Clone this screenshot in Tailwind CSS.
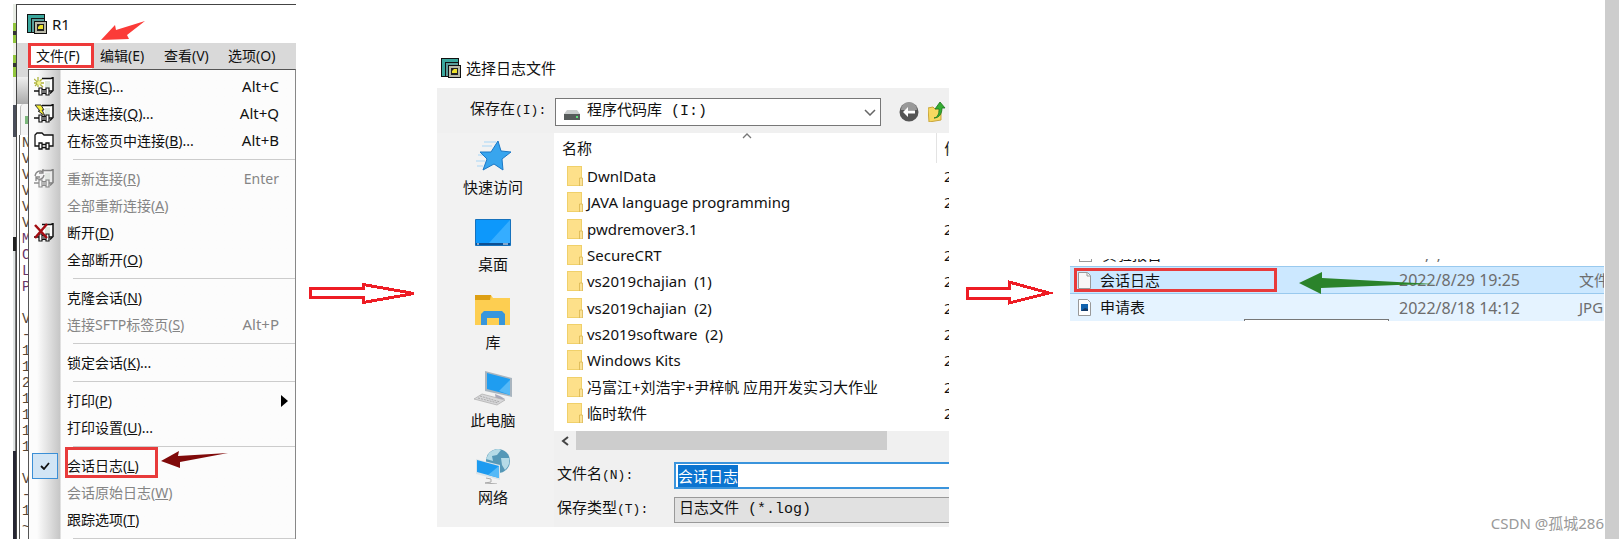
<!DOCTYPE html>
<html lang="zh-CN">
  <head>
    <meta charset="UTF-8" />
    <meta name="viewport" content="width=device-width, initial-scale=1.0" />
    <title>SecureCRT 会话日志</title>
    <script src="https://cdn.jsdelivr.net/npm/@tailwindcss/browser@4"></script>
    <style>
      body {
        font-family: 'Noto Sans', 'Noto Sans CJK SC', sans-serif;
      }
      .mono {
        font-family: 'Liberation Mono', 'Noto Sans CJK SC', monospace;
      }
    </style>
  </head>
  <body class="bg-white text-[#111] overflow-hidden">
    <!-- Shared icons -->
    <svg class="hidden">
      <symbol id="app" viewBox="0 0 20 20">
        <path d="M0 0h18v5H5v14H0z" fill="#111" />
        <path d="M1 1h16v3H4v14H1z" fill="#3aa79d" />
        <path d="M4 4h14v4H8v11H4z" fill="#111" />
        <path d="M5 5h12v2H7v11H5z" fill="#5a9d9a" />
        <path d="M7 7h13v13H7z" fill="#111" />
        <path d="M8 8h11v11H8z" fill="#b9b9a8" />
        <path d="M10 10h7v7h-7z" fill="#222" />
        <path d="M11 13l2-2h3v4h-5z" fill="#eee22a" />
      </symbol>
      <symbol id="host" viewBox="0 0 20 20">
        <path d="M8 1.500h9l2-1v13l-3 3H8z" fill="#fff" />
        <path d="M8 1.500h9l2-1v13l-3 3" fill="none" stroke="#111" stroke-width="1.500" />
        <path d="M11 4h5v7h-5z" fill="#dfe9df" />
        <path d="M0 14h5M15 14h3" stroke="#111" stroke-width="1.500" fill="none" />
        <path d="M5 11h3v7H5zM12 11h3v7h-3zM8 12.500h4v4H8zM10 12v5" fill="#fff" stroke="#111" stroke-width="1.200" />
      </symbol>
      <symbol id="folder" viewBox="0 0 16 20">
        <path d="M0 0h15v20H0z" fill="#f0d06a" />
        <path d="M1 1h13v18H1z" fill="#fde08a" />
        <path d="M12.500 12h3v8h-3z" fill="#fbe39a" stroke="#d9b54e" stroke-width=".8" />
      </symbol>
    </svg>

    <main class="flex items-start h-screen pl-[13px]">
      <!-- Session window with the file menu open -->
      <section class="relative flex w-[283px] shrink-0 h-full pt-1 overflow-hidden">
        <div class="w-[3px] shrink-0 flex flex-col">
          <div class="h-[19px] bg-[#e8ece4]"></div>
          <div class="h-2 bg-[#92c63e]"></div>
          <div class="h-1 bg-[#333]"></div>
          <div class="h-2 bg-[#92c63e]"></div>
          <div class="h-3 bg-[#f0f0e8]"></div>
          <div class="h-2 bg-[#92c63e]"></div>
          <div class="h-1 bg-[#333]"></div>
          <div class="h-[10px] bg-[#92c63e]"></div>
          <div class="h-7 bg-[#f2f2f2]"></div>
          <div class="h-8 bg-[#4a4e5a]"></div>
          <div class="h-[100px] bg-[#ececec]"></div>
          <div class="h-[14px] bg-[#222]"></div>
          <div class="h-[200px] bg-[#e0e4e4] border-r border-[#777]"></div>
          <div class="flex-1 bg-[#262633]"></div>
        </div>
        <div class="flex-1 flex flex-col min-w-0 border-l border-t border-[#444]">
          <header class="h-[38px] shrink-0 flex items-center gap-[5px] pl-[10px]">
            <svg class="size-5"><use href="#app" /></svg>
            <h1 class="text-[15px]">R1</h1>
          </header>
          <nav class="relative h-[26px] shrink-0 flex items-center pl-[11px] bg-[#d9d9d9] text-sm">
            <button class="w-16 h-full pl-2 text-left bg-white">文件(F)</button>
            <button class="w-16 pl-2 text-left">编辑(E)</button>
            <button class="w-16 pl-2 text-left">查看(V)</button>
            <button class="w-16 pl-2 text-left whitespace-nowrap">选项(O)</button>
            <div class="absolute left-[11px] top-0 w-[66px] h-[25px] border-3 border-[#ee3a3a]"></div>
          </nav>
          <div class="flex-1 flex min-h-0">
            <!-- Visible edge of the terminal -->
            <div class="w-[11px] shrink-0 overflow-hidden flex flex-col bg-white">
              <div class="h-2 shrink-0 bg-[#d9d9d9]"></div>
              <div class="h-[27px] shrink-0 bg-linear-to-b from-[#efefef] to-[#aaa]"></div>
              <div class="h-[31px] shrink-0 bg-[#f4f4f4] rounded-tl border-l border-[#bbb] ml-[3px] pl-1 pt-3">
                <div class="h-2 w-1 bg-[#7cb87c]"></div>
              </div>
              <pre class="flex-1 ml-[2px] pl-[2px] border-l border-[#555] mono text-sm leading-4 text-[#543]">N
V
V
V
V
V
<span class="text-[#636]">M
C
L
P</span>

V
-
1
1
2
1
1
1
1

V
-
1
~</pre>
            </div>
            <!-- File menu -->
            <div class="flex-1 relative flex flex-col pt-[3px] border-x border-t border-[#555] border-r-[#888] text-sm bg-linear-to-r from-[#fcfcfc] from-[8px] via-[#c6c6c6] via-[31px] to-[#fcfcfc] to-[32px]" role="menu">
              <button class="h-[27px] shrink-0 flex items-center pl-[5px] pr-4" role="menuitem">
                <svg class="w-5 h-5 mr-[13px]" viewBox="0 0 20 20"><use href="#host" /><path d="M0 2l9 8M1 9l7-7M4 0v10M0 6h10" stroke="#aeb43c" stroke-width="1.300" /><circle cx="5" cy="6" r="2" fill="#f4f48c" /></svg>
                <span>连接(<u>C</u>)...</span><span class="ml-auto text-[15px]">Alt+C</span>
              </button>
              <button class="h-[27px] shrink-0 flex items-center pl-[5px] pr-4" role="menuitem">
                <svg class="w-5 h-5 mr-[13px]" viewBox="0 0 20 20"><use href="#host" /><path d="M1 1h6l3 5H8l3 6-7-5h2z" fill="#f5ee35" stroke="#333" /></svg>
                <span>快速连接(<u>Q</u>)...</span><span class="ml-auto text-[15px]">Alt+Q</span>
              </button>
              <button class="h-[27px] shrink-0 flex items-center pl-[5px] pr-4" role="menuitem">
                <svg class="w-5 h-5 mr-[13px]" viewBox="0 0 20 20" fill="#fff" stroke="#111" stroke-width="1.300"><path d="M5 15H1V4l2-2h5l2 2h9v11h-4" /><path d="M5 12h3v6H5zM12 12h3v6h-3zM8 13.500h4v3H8z" /></svg>
                <span>在标签页中连接(<u>B</u>)...</span><span class="ml-auto text-[15px]">Alt+B</span>
              </button>
              <hr class="my-[5px] ml-[44px] border-[#ccc]" />
              <button class="h-[27px] shrink-0 flex items-center pl-[5px] pr-4 text-[#858585]" role="menuitem" disabled>
                <svg class="w-5 h-5 mr-[13px]" viewBox="0 0 20 20"><g opacity=".45"><use href="#host" /></g><path d="M1 7c1-5 5-6 8-4M9 0v4H5M10 6c-1 5-5 5-8 3M2 12V8h4" fill="none" stroke="#888" stroke-width="1.300" /></svg>
                <span>重新连接(<u>R</u>)</span><span class="ml-auto">Enter</span>
              </button>
              <button class="h-[27px] shrink-0 flex items-center pl-[38px] text-[#858585]" role="menuitem" disabled><span>全部重新连接(<u>A</u>)</span></button>
              <button class="h-[27px] shrink-0 flex items-center pl-[5px]" role="menuitem">
                <svg class="w-5 h-5 mr-[13px]" viewBox="0 0 20 20"><use href="#host" /><path d="M1 2l12 13M13 1L1 15" stroke="#a30d12" stroke-width="2.500" /></svg>
                <span>断开(<u>D</u>)</span>
              </button>
              <button class="h-[27px] shrink-0 flex items-center pl-[38px]" role="menuitem"><span>全部断开(<u>O</u>)</span></button>
              <hr class="my-[5px] ml-[44px] border-[#ccc]" />
              <button class="h-[27px] shrink-0 flex items-center pl-[38px]" role="menuitem"><span>克隆会话(<u>N</u>)</span></button>
              <button class="h-[27px] shrink-0 flex items-center pl-[38px] pr-4 text-[#858585]" role="menuitem" disabled>
                <span>连接SFTP标签页(<u>S</u>)</span><span class="ml-auto text-[15px]">Alt+P</span>
              </button>
              <hr class="my-[5px] ml-[44px] border-[#ccc]" />
              <button class="h-[27px] shrink-0 flex items-center pl-[38px]" role="menuitem"><span>锁定会话(<u>K</u>)...</span></button>
              <hr class="my-[5px] ml-[44px] border-[#ccc]" />
              <button class="h-[27px] shrink-0 flex items-center pl-[38px] pr-[7px]" role="menuitem">
                <span>打印(<u>P</u>)</span>
                <svg class="ml-auto w-[7px] h-3" viewBox="0 0 7 12"><path d="M0 0l7 6-7 6z" fill="#000" /></svg>
              </button>
              <button class="h-[27px] shrink-0 flex items-center pl-[38px]" role="menuitem"><span>打印设置(<u>U</u>)...</span></button>
              <hr class="my-[5px] ml-[44px] border-[#ccc]" />
              <button class="relative h-[27px] shrink-0 flex items-center pl-[3px]" role="menuitemcheckbox" aria-checked="true">
                <span class="w-[26px] h-[26px] mr-[9px] flex items-center justify-center bg-[#d2e5f5] border border-[#3b8fd6]">
                  <svg class="w-[10px] h-2" viewBox="0 0 10 8"><path d="M1 4l3 3 5-6" fill="none" stroke="#111" stroke-width="1.800" /></svg>
                </span>
                <span>会话日志(<u>L</u>)</span>
                <span class="absolute left-9 -top-[5px] w-[93px] h-[31px] border-3 border-[#e83b3b]"></span>
                <svg class="absolute left-[132px] -top-px w-[68px] h-[18px]" viewBox="0 0 68 18"><path d="M0 10L18 0l-1 5 50-3-48 9 0 6z" fill="#800a0a" /></svg>
              </button>
              <button class="h-[27px] shrink-0 flex items-center pl-[38px] text-[#858585]" role="menuitem" disabled><span>会话原始日志(<u>W</u>)</span></button>
              <button class="h-[27px] shrink-0 flex items-center pl-[38px]" role="menuitem"><span>跟踪选项(<u>T</u>)</span></button>
              <hr class="my-[5px] ml-[44px] border-[#ccc]" />
            </div>
          </div>
        </div>
        <svg class="absolute left-[88px] top-[21px] w-[44px] h-[20px]" viewBox="0 0 44 20"><path d="M0 19L14 4l1 5L44 0 26 14l2 4z" fill="#fb3b38" /></svg>
      </section>

      <svg class="shrink-0 mt-[282px] ml-3 w-[110px] h-6" viewBox="0 0 110 24"><path d="M2 6.500h53v-4L106 11.500 55 20.500v-5H2z" fill="#fff" stroke="#ee1c24" stroke-width="3" shape-rendering="crispEdges" /></svg>

      <!-- Save log file dialog -->
      <section class="shrink-0 ml-[19px] mt-12 w-[512px] overflow-hidden text-[15px]">
        <header class="h-10 flex items-center gap-[5px] pl-1">
          <svg class="size-5"><use href="#app" /></svg>
          <h2>选择日志文件</h2>
        </header>
        <form class="bg-[#f0f0f0] h-[439px] flex flex-col">
          <div class="h-[45px] shrink-0 flex items-center pt-[2px] pl-[33px]">
            <label for="place" class="w-[85px] mono">保存在<span class="text-[13px]">(I):</span></label>
            <div class="relative w-[326px] h-7">
              <select id="place" class="mono appearance-none w-full h-full pl-[31px] bg-white border border-[#777] leading-6">
                <option>程序代码库 (I:)</option>
              </select>
              <svg class="absolute left-[9px] top-3 w-4 h-[10px]" viewBox="0 0 16 10"><path d="M3 0h10l3 4H0z" fill="#c9cccc" /><path d="M0 4h16v6H0z" fill="#565b5a" /><path d="M12 6h2v2h-2z" fill="#5fe07c" /></svg>
              <svg class="absolute right-[5px] top-[11px] w-3 h-[7px]" viewBox="0 0 12 7"><path d="M1 1l5 5 5-5" fill="none" stroke="#666" stroke-width="1.500" /></svg>
            </div>
            <button type="button" class="ml-[18px]" aria-label="后退">
              <svg class="size-5" viewBox="0 0 20 20"><circle cx="10" cy="10" r="9.500" fill="#555" /><path d="M2 8a8 8 0 0116 0z" fill="#999" /><path d="M4 10l5-5v3.500h7v3H9V15z" fill="#fff" /></svg>
            </button>
            <button type="button" class="ml-[9px] shrink-0" aria-label="上一级">
              <svg class="w-[18px] h-5" viewBox="0 0 18 20"><path d="M0 6l5-1 2 2 6-1v12L1 20z" fill="#f6d860" stroke="#c9a53a" /><path d="M6 16c4-1 5-4 5-9H7l5-7 5 6h-3c0 6-3 10-8 10z" fill="#35ad32" stroke="#19741c" stroke-width=".8" /></svg>
            </button>
          </div>
          <div class="flex-1 flex min-h-0">
            <!-- Places -->
            <nav class="w-[117px] shrink-0 pl-[9px] bg-[#f2f2f2] leading-5">
              <button type="button" class="w-[94px] h-[78px] flex flex-col items-center pt-[7px] gap-[6px]">
                <svg class="w-[36px] h-[31px] shrink-0" viewBox="0 0 36 31"><path d="M9 2h12M7 6h10M3 15h10M1 21h9M2 26h6" stroke="#a8d6f5" stroke-width="1.200" /><path d="M23 1l3 10 10 1-9 7 1 11-9-6-11 6 4-11-7-7h11z" fill="#38a5ee" stroke="#1b78c6" /></svg>
                <span>快速访问</span>
              </button>
              <button type="button" class="w-[94px] h-[77px] flex flex-col items-center pt-2 gap-2">
                <svg class="w-9 h-[27px] shrink-0" viewBox="0 0 36 27"><path d="M.5.5h35v26H.5z" fill="#0d98fb" stroke="#1672bd" /><path d="M14 24L35 1v23z" fill="#35adff" /><path d="M1 24h34v2H1z" fill="#0b4f93" /><path d="M2 25h2M28 25h5" stroke="#fff" /></svg>
                <span>桌面</span>
              </button>
              <button type="button" class="w-[94px] h-[77px] flex flex-col items-center pt-[6px] gap-[6px]">
                <svg class="w-9 h-8 shrink-0" viewBox="0 0 36 32"><path d="M0 1h16l2 3h17v27H0z" fill="#fdce51" /><path d="M0 1h16l-1 5H0z" fill="#dd9f13" /><path d="M6 31V20l3-3h18l3 3v11h-6v-7H12v7z" fill="#3796dc" /></svg>
                <span>库</span>
              </button>
              <button type="button" class="w-[94px] h-[78px] flex flex-col items-center pt-[6px] gap-1">
                <svg class="w-[38px] h-[35px] shrink-0" viewBox="0 0 38 35"><path d="M11 0l27 7v19l-27-6z" fill="#a9b5bf" /><path d="M13 2l23 6v16l-23-6z" fill="#1f9df0" /><path d="M25 20l11-11v15z" fill="#55b9f7" /><path d="M21 23l5 2 5 3-9 1z" fill="#aab" /><path d="M8 23l23 6-8 5-23-6z" fill="#d8d8da" stroke="#aaa" stroke-width=".7" /><path d="M6 25l20 6M4 27l20 5" stroke="#aaa" stroke-dasharray="2 1" /></svg>
                <span>此电脑</span>
              </button>
              <button type="button" class="w-[94px] h-[78px] flex flex-col items-center pt-[5px] gap-[3px]">
                <svg class="w-[34px] h-9 shrink-0" viewBox="0 0 34 36"><circle cx="22" cy="13" r="12" fill="#5598b7" /><path d="M13 5c5-4 10-5 12-3l-4 5-5 1 1 5-7-2zM25 10l8 0c1 6-1 9-4 12l-3-5z" fill="#b5dbe7" /><path d="M0 11l24 6v15L0 26z" fill="#dce4e8" /><path d="M1 12l22 6v12L1 24z" fill="#1d9bf0" /><path d="M12 27l11-9v12z" fill="#55b9f7" /><path d="M10 30l5 1v3l-6 1 12 1" stroke="#aaa" fill="none" /></svg>
                <span>网络</span>
              </button>
            </nav>
            <div class="flex-1 min-w-0 flex flex-col">
              <!-- File list -->
              <div class="relative h-[298px] shrink-0 bg-white">
                <svg class="absolute left-[188px] top-0 w-[10px] h-[6px]" viewBox="0 0 10 6"><path d="M1 5l4-4 4 4" fill="none" stroke="#777" stroke-width="1.300" /></svg>
                <table class="w-full table-fixed leading-5">
                  <thead>
                    <tr class="h-[30px]">
                      <th class="w-[382px] pl-2 text-left font-normal border-r border-[#e3e3e3]">名称</th>
                      <th class="pl-2 text-left font-normal overflow-hidden whitespace-nowrap">修改日期</th>
                    </tr>
                  </thead>
                  <tbody id="files"></tbody>
                </table>
              </div>
              <div class="h-[19px] shrink-0 flex items-center pl-[7px]">
                <svg class="w-2 h-[10px]" viewBox="0 0 8 10"><path d="M7 1L2 5l5 4" fill="none" stroke="#444" stroke-width="2" /></svg>
                <div class="ml-[7px] w-[311px] h-full bg-[#cdcdcd]"></div>
              </div>
              <div class="mt-3 flex items-center pl-[3px]">
                <label for="filename" class="w-[117px] shrink-0 mono pt-[2px]">文件名<span class="text-[13px]">(N):</span></label>
                <input id="filename" type="text" value="会话日志" class="mono w-[400px] shrink-0 h-[27px] pl-[2px] bg-white border-2 border-[#3a94dc] outline-none selection:bg-[#0b74d0] selection:text-white" />
              </div>
              <div class="mt-2 flex items-center pl-[3px]">
                <label for="filetype" class="w-[117px] shrink-0 mono">保存类型<span class="text-[13px]">(T):</span></label>
                <select id="filetype" class="mono appearance-none w-[400px] shrink-0 h-[26px] pl-1 leading-6 bg-[#e1e1e1] border border-[#999]">
                  <option>日志文件 (*.log)</option>
                </select>
              </div>
            </div>
          </div>
        </form>
      </section>

      <svg class="shrink-0 mt-[279px] ml-4 w-[90px] h-7" viewBox="0 0 90 28"><path d="M2 9h42V3l40 11-40 10v-5H2z" fill="#fff" stroke="#ee1c24" stroke-width="3" shape-rendering="crispEdges" /></svg>

      <!-- Saved log in the explorer -->
      <section class="flex-1 min-w-0 ml-[15px] h-full flex flex-col justify-between">
        <div class="relative mt-[259px] h-[62px] mr-[1px] overflow-hidden text-[15px]">
          <div class="h-[7px] overflow-hidden flex items-end pl-[9px] pb-1">
            <span class="w-[13px] h-5 border border-[#999]"></span>
            <span class="w-[307px] shrink-0 pl-[10px] leading-4">实验报告</span>
            <span class="leading-4 text-[#666] pl-[26px]">,&nbsp;&nbsp;,</span>
          </div>
          <div class="h-7 flex items-center bg-[#cce8ff] border-y border-[#99c9ee] pl-2">
            <svg class="w-[13px] h-[17px] shrink-0" viewBox="0 0 13 17"><path d="M.5.5h9l3 3v13H.5z" fill="#f8f8f8" stroke="#999" /><path d="M9 1v3h3" fill="none" stroke="#999" /></svg>
            <span class="w-[299px] shrink-0 ml-[9px]">会话日志</span>
            <span class="w-[180px] shrink-0 text-base text-[#6d6d6d]">2022/8/29 19:25</span>
            <span class="whitespace-nowrap text-[#6d6d6d]">文件</span>
          </div>
          <div class="h-[27px] flex items-center bg-[#e5f3ff] pl-2">
            <svg class="w-[13px] h-[17px] shrink-0" viewBox="0 0 13 17"><path d="M.5.5h9l3 3v13H.5z" fill="#fff" stroke="#999" /><path d="M3 5h7v7H3z" fill="#1464ae" /><path d="M3 12l4-3 3 1v2z" fill="#163a66" /></svg>
            <span class="w-[299px] shrink-0 ml-[9px]">申请表</span>
            <span class="w-[180px] shrink-0 text-base text-[#6d6d6d]">2022/8/18 14:12</span>
            <span class="whitespace-nowrap text-[#6d6d6d]">JPG 文件</span>
          </div>
          <div class="absolute left-1 top-[9px] w-[203px] h-6 border-3 border-[#e83b3b]"></div>
          <svg class="absolute left-[229px] top-[13px] w-[138px] h-[22px]" viewBox="0 0 138 22"><path d="M0 11L23 0v6l75 4 38 2-38 1-76 3v6z" fill="#2b832b" /></svg>
          <div class="absolute left-[174px] top-[60px] w-[145px] h-1 bg-white border border-[#777]"></div>
        </div>
        <p class="mb-1 mr-[1px] text-right text-[#999] text-[15px] leading-6">CSDN @孤城286</p>
      </section>
      <div class="w-[14px] h-full shrink-0 bg-[#cdcdcd]"></div>
    </main>

    <script>
      const files = ['DwnlData', 'JAVA language programming', 'pwdremover3.1', 'SecureCRT', 'vs2019chajian  (1)', 'vs2019chajian  (2)', 'vs2019software  (2)', 'Windows Kits', '冯富江+刘浩宇+尹梓帆 应用开发实习大作业', '临时软件'];

      document.getElementById('files').innerHTML = files
        .map(
          (name) => `
            <tr class="h-[26px] nth-[3n]:h-[27px]">
              <td class="pl-[13px]">
                <div class="flex items-center gap-1 whitespace-pre">
                  <svg class="w-4 h-5 shrink-0"><use href="#folder" /></svg><span>${name}</span>
                </div>
              </td>
              <td class="pl-2 overflow-hidden">2</td>
            </tr>`
        )
        .join('');

      const filename = document.getElementById('filename');
      filename.focus({ preventScroll: true });
      filename.select();
    </script>
  </body>
</html>
